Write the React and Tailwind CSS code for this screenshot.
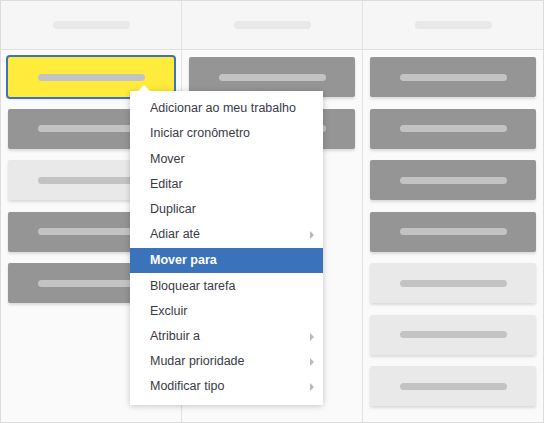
import React from "react";

const Bar = () => <div className="h-[7px] w-[107px] rounded-full bg-[#c3c3c3]" />;

const Card = ({ kind }) => {
  const base = "h-[40px] rounded-[2px] flex items-center justify-center shadow-[0_2px_3px_rgba(0,0,0,0.13)]";
  const color =
    kind === "yellow"
      ? "bg-[#ffeb3b] ring-2 ring-[#3d72c2]"
      : kind === "light"
      ? "bg-[#e9e9e9]"
      : "bg-[#959595]";
  return (
    <div className={`${base} ${color}`}>
      <Bar />
    </div>
  );
};

const Column = ({ cards, last }) => (
  <div className={`flex flex-col ${last ? "w-[180px]" : "w-[181px] border-r border-[#e2e2e2]"}`}>
    <div className="h-[49px] bg-[#f6f6f6] border-b border-[#e0e0e0] flex items-center justify-center">
      <div className="h-[8px] w-[77px] rounded-full bg-[#e8e8e8]" />
    </div>
    <div className="flex-1 bg-[#fafafa] px-[7px] pt-[7px] flex flex-col gap-[11.5px]">
      {cards.map((c, i) => (
        <Card key={i} kind={c} />
      ))}
    </div>
  </div>
);

const Caret = () => (
  <span className="ml-auto mr-[9px] w-0 h-0 border-y-[4px] border-y-transparent border-l-[4px] border-l-[#b9b9b9]" />
);

const Item = ({ label, sub, active, gap }) => (
  <div
    className={`h-[25px] flex items-center pl-[20px] ${gap ? "mt-[1px]" : ""} ${
      active ? "bg-[#3b73ba] text-white font-bold" : "text-[#3a3a46]"
    }`}
  >
    <span>{label}</span>
    {sub && <Caret />}
  </div>
);

export default function App() {
  return (
    <div
      className="relative w-[544px] h-[423px] border border-[#dcdcdc] flex bg-[#fafafa] overflow-hidden"
      style={{ fontFamily: '"Liberation Sans", Arial, sans-serif' }}
    >
      <Column cards={["yellow", "gray", "light", "gray", "gray"]} />
      <Column cards={["gray", "gray"]} />
      <Column cards={["gray", "gray", "gray", "gray", "light", "light", "light"]} last />

      <div className="absolute left-[129px] top-[90px] w-[193px] bg-white shadow-[0_1px_6px_rgba(0,0,0,0.22)] pt-[5px] pb-[6px] text-[12.5px]">
        <div className="absolute -top-[6px] left-[8px] w-0 h-0 border-x-[6px] border-x-transparent border-b-[6px] border-b-white" />
        <Item label="Adicionar ao meu trabalho" />
        <Item label="Iniciar cronômetro" />
        <Item label="Mover" gap />
        <Item label="Editar" />
        <Item label="Duplicar" />
        <Item label="Adiar até" sub />
        <Item label="Mover para" active gap />
        <Item label="Bloquear tarefa" gap />
        <Item label="Excluir" />
        <Item label="Atribuir a" sub />
        <Item label="Mudar prioridade" sub />
        <Item label="Modificar tipo" sub />
      </div>
    </div>
  );
}
